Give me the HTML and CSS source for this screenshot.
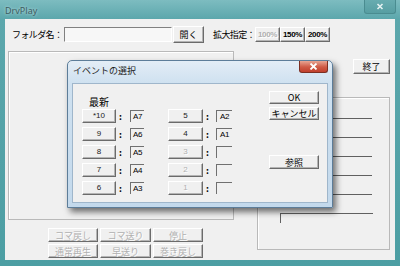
FILE: index.html
```html
<!DOCTYPE html>
<html lang="ja">
<head>
  <meta charset="UTF-8">
  <title>DrvPlay</title>
  <link rel="stylesheet" href="styles.css">
</head>
<body>
  <div class="window">
    <!-- Title bar -->
    <div class="titlebar">
      <span class="app-title">DrvPlay</span>
      <span class="win-close">
        <svg width="8" height="7" viewBox="0 0 8 7"><path d="M1.5 1 L6.5 6 M6.5 1 L1.5 6" stroke="#e4f1f1" stroke-width="1.6"/></svg>
      </span>
    </div>

    <div class="client">
      <!-- Folder / zoom row -->
      <div class="toolbar">
        <span class="label folder-label">フォルダ名：</span>
        <span class="textbox folder-input"></span>
        <button class="btn open-btn">開く</button>
        <span class="label zoom-label">拡大指定：</span>
        <button class="btn zoom-btn" disabled>100%</button>
        <button class="btn zoom-btn">150%</button>
        <button class="btn zoom-btn">200%</button>
      </div>

      <div class="main">
        <div class="left-col">
          <div class="view-box"></div>
          <div class="play-buttons">
            <button class="btn" disabled>コマ戻し</button>
            <button class="btn" disabled>コマ送り</button>
            <button class="btn" disabled>停止</button>
            <button class="btn" disabled>通常再生</button>
            <button class="btn" disabled>早送り</button>
            <button class="btn" disabled>巻き戻し</button>
          </div>
        </div>

        <div class="right-col">
          <button class="btn exit-btn">終了</button>
          <div class="list-box">
            <div class="list-line"></div>
            <div class="list-line"></div>
            <div class="list-line"></div>
            <div class="list-line"></div>
            <div class="list-line"></div>
            <div class="list-line last"></div>
          </div>
        </div>
      </div>
    </div>

    <!-- Modal dialog -->
    <div class="dialog">
      <div class="dlg-titlebar">
        <span class="dlg-title">イベントの選択</span>
        <span class="dlg-close">
          <svg width="9" height="7" viewBox="0 0 9 7"><path d="M1.5 0.5 L7.5 6.5 M7.5 0.5 L1.5 6.5" stroke="#fff" stroke-width="1.8"/></svg>
        </span>
      </div>
      <div class="dlg-client">
        <div class="event-area">
          <div class="newest">最新</div>
          <div class="event-cols">
            <div class="event-col first">
              <div class="event-row"><button class="btn ev-btn">*10</button><span class="colon">:</span><span class="slot">A7</span></div>
              <div class="event-row"><button class="btn ev-btn">9</button><span class="colon">:</span><span class="slot">A6</span></div>
              <div class="event-row"><button class="btn ev-btn">8</button><span class="colon">:</span><span class="slot">A5</span></div>
              <div class="event-row"><button class="btn ev-btn">7</button><span class="colon">:</span><span class="slot">A4</span></div>
              <div class="event-row"><button class="btn ev-btn">6</button><span class="colon">:</span><span class="slot">A3</span></div>
            </div>
            <div class="event-col second">
              <div class="event-row"><button class="btn ev-btn">5</button><span class="colon">:</span><span class="slot">A2</span></div>
              <div class="event-row"><button class="btn ev-btn">4</button><span class="colon">:</span><span class="slot">A1</span></div>
              <div class="event-row"><button class="btn ev-btn" disabled>3</button><span class="colon">:</span><span class="slot"></span></div>
              <div class="event-row"><button class="btn ev-btn" disabled>2</button><span class="colon">:</span><span class="slot"></span></div>
              <div class="event-row"><button class="btn ev-btn" disabled>1</button><span class="colon">:</span><span class="slot"></span></div>
            </div>
          </div>
        </div>
        <div class="dlg-actions">
          <button class="btn act-btn ok-btn">OK</button>
          <button class="btn act-btn">キャンセル</button>
          <button class="btn act-btn ref-btn">参照</button>
        </div>
      </div>
    </div>
  </div>
</body>
</html>
```

FILE: styles.css
```css
body {
  margin: 0;
  font-family: "Noto Sans CJK JP", "Noto Sans", sans-serif;
  font-size: 9px;
  color: #000;
}

.window {
  position: relative;
  width: 400px;
  height: 266px;
  background: linear-gradient(180deg, #7dbcc0 0, #5ca7ac 19px, #4c9ea3 100%);
  overflow: hidden;
}

.titlebar {
  height: 19px;
  display: flex;
  align-items: flex-start;
  padding-left: 5px;
}

.app-title {
  font-family: "Noto Sans", sans-serif;
  font-size: 9px;
  line-height: 9px;
  margin-top: 6px;
  color: #3b5c5f;
  text-shadow: 0 0 3px #c9e6e8;
}

.win-close {
  margin-left: auto;
  margin-right: 4px;
  width: 30px;
  height: 13px;
  border: 1px solid #4a8c90;
  border-top: none;
  border-radius: 0 0 3px 3px;
  background: linear-gradient(180deg, #68acb0, #579ea2);
  display: flex;
  align-items: center;
  justify-content: center;
}

.client {
  margin: 0 5px;
  height: 241px;
  background: #f0f0f0;
}

/* generic classic button */
.btn {
  box-sizing: border-box;
  margin: 0;
  padding: 0;
  font-family: "Noto Sans CJK JP", "Noto Sans", sans-serif;
  font-size: 9px;
  line-height: 1;
  color: #000;
  background: #f0f0f0;
  border: 1px solid;
  border-color: #fff #6b6b6b #6b6b6b #fff;
  box-shadow: inset -1px -1px 0 #b4b4b4;
}

.btn:disabled {
  color: #b0b0b0;
  text-shadow: 1px 1px 0 #fff;
}

.label {
  letter-spacing: -0.6px;
  white-space: nowrap;
}

.toolbar {
  display: flex;
  align-items: center;
  height: 17px;
  padding: 7px 0 0 7px;
}

.folder-label {
  width: 52px;
}

.textbox {
  box-sizing: border-box;
  background: #f7f7f7;
  border: 1px solid;
  border-color: #808080 #fff #fff #808080;
}

.folder-input {
  width: 108px;
  height: 15px;
}

.open-btn {
  width: 31px;
  height: 17px;
  margin-left: 1px;
}

.zoom-label {
  margin-left: 9px;
  width: 42px;
}

.zoom-btn {
  width: 25px;
  height: 15px;
  font-family: "Liberation Sans", sans-serif;
  font-size: 8px;
  font-weight: bold;
  letter-spacing: -0.4px;
}

.main {
  display: flex;
  margin-top: 8px;
  padding-left: 3px;
}

.left-col {
  width: 226px;
}

.view-box {
  box-sizing: border-box;
  height: 169px;
  border: 1px solid #b9b9b9;
  box-shadow: inset 1px 1px 0 #fff;
}

.play-buttons {
  display: grid;
  grid-template-columns: 50px 51px 50px;
  grid-auto-rows: 14px;
  column-gap: 2px;
  row-gap: 2px;
  margin-top: 8px;
  padding-left: 40px;
}

.right-col {
  width: 133px;
  margin-left: 23px;
  display: flex;
  flex-direction: column;
}

.exit-btn {
  align-self: flex-end;
  width: 37px;
  height: 15px;
  margin-top: 8px;
}

.list-box {
  box-sizing: border-box;
  margin-top: 23px;
  height: 153px;
  border: 1px solid #b9b9b9;
  box-shadow: inset 1px 1px 0 #fff;
  padding-top: 20px;
}

.list-line {
  margin-left: 22px;
  width: 92px;
  height: 18px;
  border-top: 1px solid #606060;
}

.list-line.last {
  height: 9px;
  border-left: 1px solid #606060;
}

/* dialog */
.dialog {
  position: absolute;
  left: 67px;
  top: 60px;
  width: 266px;
  height: 148px;
  box-sizing: border-box;
  border: 1px solid #5d7d99;
  border-radius: 5px 5px 0 0;
  background: linear-gradient(180deg, #e3edf6 0, #cfe1f0 22px, #c3d9ec 100%);
  box-shadow: 3px 4px 6px rgba(0, 0, 0, 0.55);
}

.dlg-titlebar {
  height: 22px;
  display: flex;
  align-items: flex-start;
  padding-left: 5px;
}

.dlg-title {
  margin-top: 5px;
  line-height: 10px;
  font-size: 9px;
  color: #1e1e1e;
}

.dlg-close {
  margin-left: auto;
  margin-right: 4px;
  width: 29px;
  height: 12px;
  box-sizing: border-box;
  border: 1px solid #7c2f22;
  border-top: none;
  border-radius: 0 0 3px 3px;
  background: linear-gradient(180deg, #e8a593, #cf5a45 55%, #c0402d);
  display: flex;
  align-items: center;
  justify-content: center;
}

.dlg-client {
  display: flex;
  margin: 0 4px;
  height: 120px;
  box-sizing: border-box;
  background: #f0f0f0;
  border: 1px solid #9fb6cb;
}

.event-area {
  width: 196px;
  padding: 13px 0 0 9px;
  box-sizing: border-box;
}

.newest {
  margin-left: 7px;
  height: 12px;
  line-height: 10px;
  font-size: 10px;
}

.event-cols {
  display: flex;
  gap: 24px;
}

.event-col {
  display: flex;
  flex-direction: column;
  gap: 4px;
}

.event-row {
  display: flex;
  align-items: center;
  height: 14px;
}

.ev-btn {
  width: 34px;
  height: 14px;
  font-family: "Liberation Sans", sans-serif;
  font-size: 8px;
  color: #222;
}

.second .ev-btn {
  width: 35px;
}

.colon {
  width: 14px;
  padding-left: 3px;
  box-sizing: border-box;
  font-weight: bold;
  font-size: 9px;
  line-height: 9px;
}

.second .colon {
  width: 13px;
}

.slot {
  box-sizing: border-box;
  width: 14px;
  height: 12px;
  border-top: 1px solid #707070;
  border-left: 1px solid #707070;
  font-family: "Liberation Sans", sans-serif;
  font-size: 8px;
  line-height: 11px;
  text-align: center;
  letter-spacing: -0.3px;
}

.second .slot {
  width: 16px;
}

.dlg-actions {
  display: flex;
  flex-direction: column;
  padding-top: 7px;
}

.act-btn {
  width: 50px;
  height: 13px;
}

.act-btn + .act-btn {
  margin-top: 3px;
}

.ref-btn {
  height: 14px;
  margin-top: 35px !important;
}
```
